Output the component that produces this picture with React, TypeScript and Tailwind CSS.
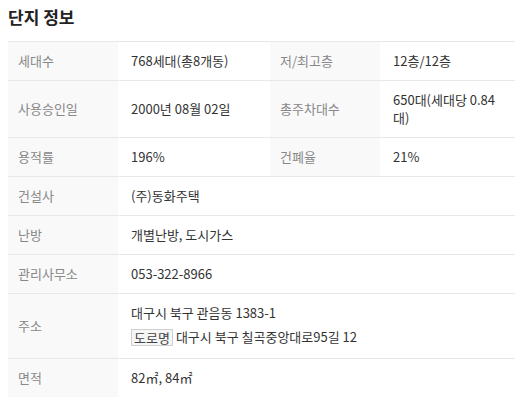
const font = "font-['Noto_Sans_CJK_KR','Noto_Sans',sans-serif]"

type Row = { label: string; value: React.ReactNode; label2?: string; value2?: React.ReactNode }

const rows: Row[] = [
  { label: "세대수", value: "768세대(총8개동)", label2: "저/최고층", value2: "12층/12층" },
  { label: "사용승인일", value: "2000년 08월 02일", label2: "총주차대수", value2: "650대(세대당 0.84대)" },
  { label: "용적률", value: "196%", label2: "건폐율", value2: "21%" },
  { label: "건설사", value: "(주)동화주택" },
  { label: "난방", value: "개별난방, 도시가스" },
  { label: "관리사무소", value: "053-322-8966" },
  {
    label: "주소",
    value: (
      <div>
        <div>대구시 북구 관음동 1383-1</div>
        <div className="mt-[4px] flex items-center leading-[22px]">
          <span className="mr-[3px] border border-[#cfcfcf] bg-[#f6f6f6] px-[2px] leading-[15px] text-[#444]">
            도로명
          </span>
          대구시 북구 칠곡중앙대로95길 12
        </div>
      </div>
    ),
  },
  { label: "면적", value: "82㎡, 84㎡" },
]

export default function App() {
  return (
    <div className={`${font} w-[531px] h-[397px] overflow-hidden bg-white px-[8px] pt-[5px]`}>
      <h2 className="text-[17px] font-bold leading-[24px] text-[#222]">단지 정보</h2>

      <table className="mt-[12px] w-[507px] table-fixed border-collapse text-[13px] leading-[18px]">
        <colgroup>
          <col className="w-[110px]" />
          <col className="w-[152px]" />
          <col className="w-[110px]" />
          <col className="w-[135px]" />
        </colgroup>
        <tbody>
          {rows.map((r) => (
            <tr key={r.label} className="border-t border-b border-[#e8e8e8]">
              <th className="bg-[#f9f9f9] py-[10px] pl-[10px] text-left align-middle font-normal text-[#888]">
                {r.label}
              </th>
              {r.label2 ? (
                <>
                  <td className="py-[10px] pl-[13px] align-middle text-[#333]">{r.value}</td>
                  <th className="bg-[#f9f9f9] py-[10px] pl-[10px] text-left align-middle font-normal text-[#888]">
                    {r.label2}
                  </th>
                  <td className="py-[10px] pl-[13px] pr-[10px] align-middle text-[#333]">{r.value2}</td>
                </>
              ) : (
                <td colSpan={3} className="py-[10px] pl-[13px] align-middle text-[#333]">
                  {r.value}
                </td>
              )}
            </tr>
          ))}
        </tbody>
      </table>
    </div>
  )
}
